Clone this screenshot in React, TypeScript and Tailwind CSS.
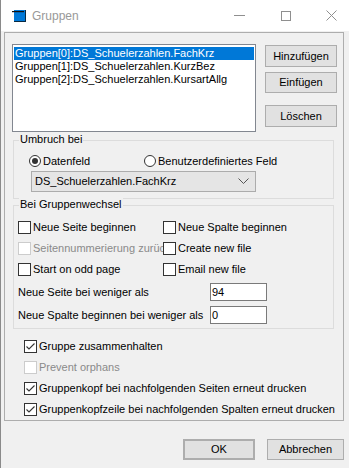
import React from "react";

const font = { fontFamily: '"Liberation Sans", Arial, sans-serif' };

function Check({ checked = false, disabled = false, label, labelClass = "" }: { checked?: boolean; disabled?: boolean; label: string; labelClass?: string }) {
  return (
    <div className="flex items-center h-[13px] whitespace-nowrap">
      <div
        className={
          "w-[13px] h-[13px] shrink-0 bg-white border flex items-center justify-center " +
          (disabled ? "border-[#cccccc]" : "border-[#333333]")
        }
      >
        {checked && (
          <svg width="11" height="11" viewBox="0 0 11 11">
            <path d="M1.5 5.5 L4 8 L9.5 2.5" fill="none" stroke="#333" strokeWidth="1.1" />
          </svg>
        )}
      </div>
      <span className={"ml-[2px] text-[11px] leading-[13px] " + (disabled ? "text-[#8a8a8a] " : "text-black ") + labelClass}>
        {label}
      </span>
    </div>
  );
}

function Radio({ checked = false, label }: { checked?: boolean; label: string }) {
  return (
    <div className="flex items-center h-[12px] whitespace-nowrap">
      <div className="w-[12px] h-[12px] shrink-0 rounded-full border border-[#333333] bg-white flex items-center justify-center">
        {checked && <div className="w-[6px] h-[6px] rounded-full bg-[#333333]" />}
      </div>
      <span className="ml-[2px] text-[11px] leading-[13px] text-black">{label}</span>
    </div>
  );
}

function Btn({ label, className = "" }: { label: string; className?: string }) {
  return (
    <div
      className={
        "flex items-center justify-center bg-[#e1e1e1] border border-[#adadad] text-[11px] text-black " + className
      }
    >
      {label}
    </div>
  );
}

export default function App() {
  return (
    <div style={font} className="w-[349px] h-[468px] bg-[#f0f0f0] border-l border-[#8a8a8a] flex flex-col overflow-hidden">
      {/* Title bar */}
      <div className="h-[31px] bg-white flex items-center shrink-0 relative">
        <svg className="ml-[10px]" width="17" height="15" viewBox="0 0 17 15">
          <rect x="3" y="2" width="12" height="12" fill="#0078d7" />
          <rect x="3" y="13" width="12" height="1" fill="#0a2a40" />
          <rect x="14" y="2" width="1" height="12" fill="#0a2a40" />
          <rect x="1" y="3" width="12" height="1.2" fill="#111" />
        </svg>
        <span className="ml-[4px] text-[12px] text-[#999999]">Gruppen</span>
        <div className="ml-auto flex items-center h-full">
          <svg className="mr-[36px]" width="11" height="11" viewBox="0 0 11 11">
            <rect x="0" y="5" width="11" height="1" fill="#8f8f8f" />
          </svg>
          <svg className="mr-[35px]" width="10" height="10" viewBox="0 0 10 10">
            <rect x="0.5" y="0.5" width="9" height="9" fill="none" stroke="#8f8f8f" strokeWidth="1" />
          </svg>
          <svg className="mr-[12px]" width="11" height="11" viewBox="0 0 11 11">
            <path d="M0.5 0.5 L10.5 10.5 M10.5 0.5 L0.5 10.5" stroke="#8f8f8f" strokeWidth="1" />
          </svg>
        </div>
      </div>

      {/* Main panel */}
      <div className="ml-[3px] mt-[1px] w-[340px] h-[389px] border border-[#adadad] flex flex-col shrink-0">
        {/* list + buttons */}
        <div className="flex mt-[11px] ml-[7px]">
          <div className="w-[244px] h-[88px] bg-white border border-[#828790] px-[1px] pt-[2px] text-[11px] leading-[13px]">
            <div className="h-[13px] bg-[#0078d7] text-white pl-[1px] whitespace-nowrap">Gruppen[0]:DS_Schuelerzahlen.FachKrz</div>
            <div className="h-[13px] text-black pl-[1px] whitespace-nowrap">Gruppen[1]:DS_Schuelerzahlen.KurzBez</div>
            <div className="h-[13px] text-black pl-[1px] whitespace-nowrap">Gruppen[2]:DS_Schuelerzahlen.KursartAllg</div>
          </div>
          <div className="ml-[9px] mt-[1px] flex flex-col w-[72px]">
            <Btn label="Hinzufügen" className="h-[22px]" />
            <Btn label="Einfügen" className="h-[21px] mt-[5px]" />
            <Btn label="Löschen" className="h-[22px] mt-[12px]" />
          </div>
        </div>

        {/* Umbruch bei */}
        <div className="relative mt-[8px] ml-[8px] w-[321px] h-[59px] border border-[#dcdcdc] shrink-0">
          <div className="absolute top-[-8px] left-[5px] px-[1px] bg-[#f0f0f0] text-[11px] leading-[13px] text-black">Umbruch bei</div>
          <div className="flex mt-[14px] ml-[15px]">
            <div className="w-[115px]">
              <Radio checked label="Datenfeld" />
            </div>
            <Radio label="Benutzerdefiniertes Feld" />
          </div>
          <div className="mt-[4px] ml-[17px] w-[225px] h-[21px] bg-[#e5e5e5] border border-[#acacac] flex items-center pl-[3px] text-[11px] text-black">
            <span>DS_Schuelerzahlen.FachKrz</span>
            <svg className="ml-auto mr-[6px]" width="11" height="7" viewBox="0 0 11 7">
              <path d="M0.5 0.5 L5.5 5.5 L10.5 0.5" fill="none" stroke="#555" strokeWidth="1" />
            </svg>
          </div>
        </div>

        {/* Bei Gruppenwechsel */}
        <div className="relative mt-[6px] ml-[8px] w-[321px] h-[124px] border border-[#dcdcdc] shrink-0">
          <div className="absolute top-[-8px] left-[5px] px-[1px] bg-[#f0f0f0] text-[11px] leading-[13px] text-black">Bei Gruppenwechsel</div>
          <div className="ml-[4px] mt-[15px] flex flex-col gap-[8px]">
            <div className="flex">
              <div className="w-[145px] overflow-hidden"><Check label="Neue Seite beginnen" /></div>
              <Check label="Neue Spalte beginnen" />
            </div>
            <div className="flex">
              <div className="w-[145px] overflow-hidden"><Check disabled label="Seitennummerierung zurücksetzen" /></div>
              <Check label="Create new file" />
            </div>
            <div className="flex">
              <div className="w-[145px] overflow-hidden"><Check label="Start on odd page" /></div>
              <Check label="Email new file" />
            </div>
          </div>
          <div className="ml-[4px] mt-[7px] flex items-center h-[18px]">
            <span className="w-[192px] text-[11px] text-black">Neue Seite bei weniger als</span>
            <div className="w-[57px] h-[18px] bg-white border border-[#7a7a7a] flex items-center pl-[1px] text-[11px] text-black">94</div>
          </div>
          <div className="ml-[4px] mt-[5px] flex items-center h-[18px]">
            <span className="w-[192px] text-[11px] text-black">Neue Spalte beginnen bei weniger als</span>
            <div className="w-[57px] h-[18px] bg-white border border-[#7a7a7a] flex items-center pl-[1px] text-[11px] text-black">0</div>
          </div>
        </div>

        {/* Bottom checks */}
        <div className="ml-[19px] mt-[11px] flex flex-col gap-[8px]">
          <Check checked label="Gruppe zusammenhalten" />
          <Check disabled label="Prevent orphans" />
          <Check checked label="Gruppenkopf bei nachfolgenden Seiten erneut drucken" />
          <Check checked label="Gruppenkopfzeile bei nachfolgenden Spalten erneut drucken" />
        </div>
      </div>

      {/* Dialog buttons */}
      <div className="flex justify-end pr-[5px] mt-[18px] gap-[12px]">
        <Btn label="OK" className="w-[72px] h-[21px] border-2 border-[#0078d7]" />
        <Btn label="Abbrechen" className="w-[77px] h-[21px]" />
      </div>
    </div>
  );
}
